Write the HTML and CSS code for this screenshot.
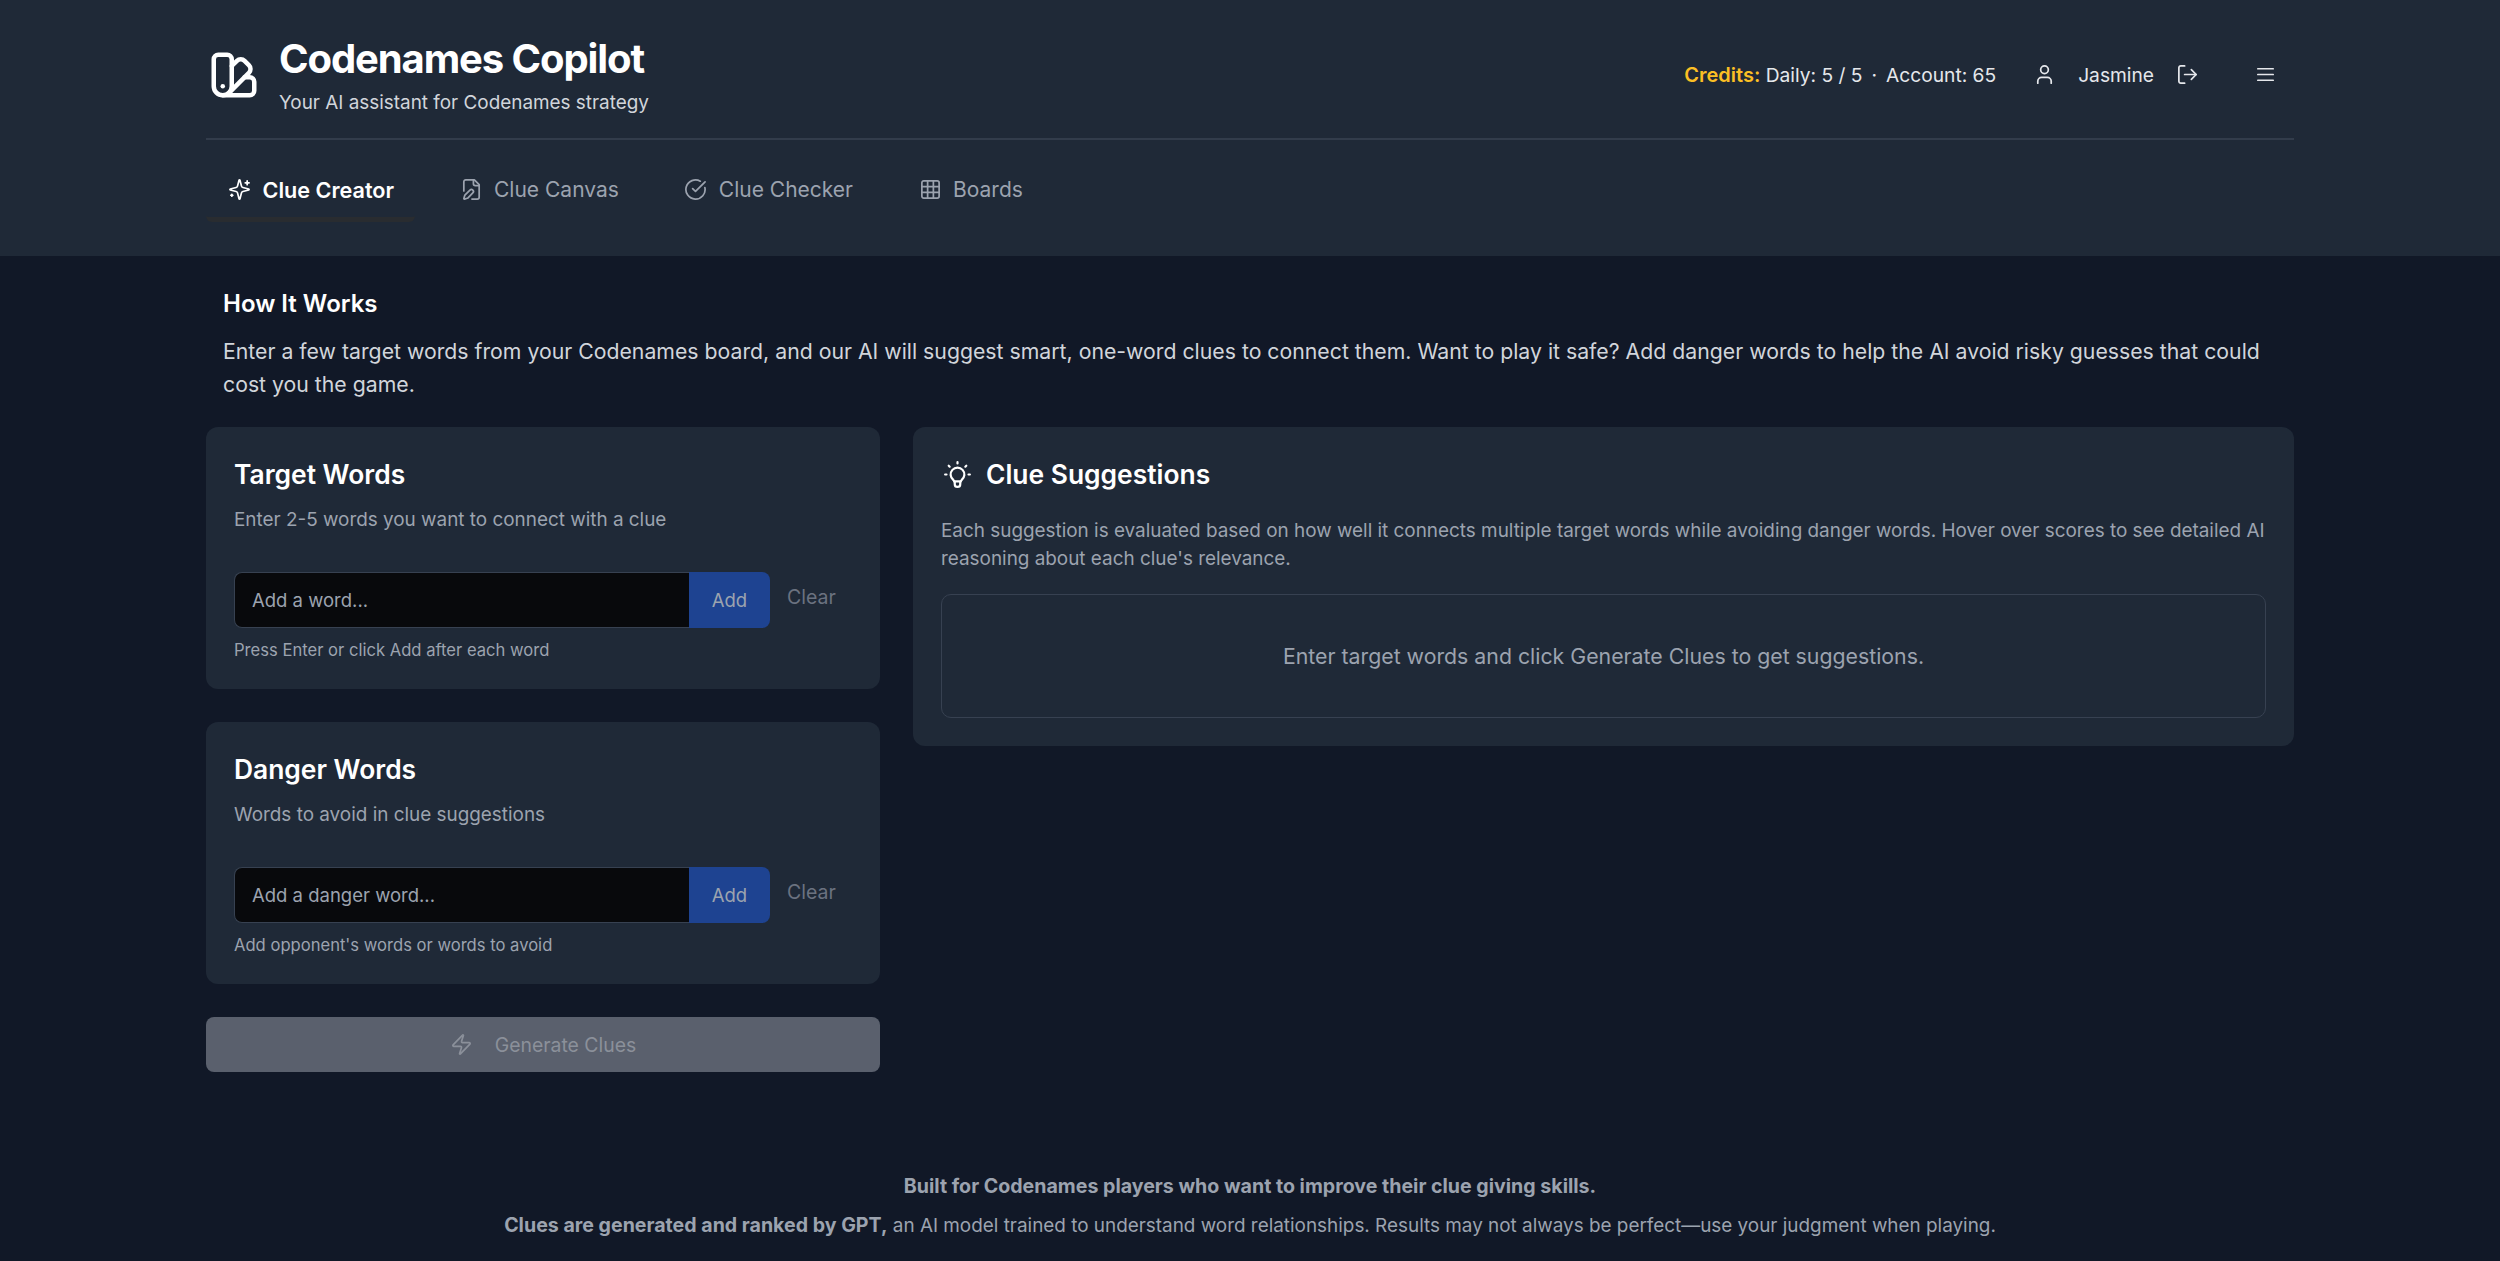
FILE: index.html
```html
<!DOCTYPE html>
<html lang="en">
<head>
  <meta charset="UTF-8">
  <meta name="viewport" content="width=device-width, initial-scale=1.0">
  <title>Codenames Copilot</title>
  <link rel="stylesheet" href="styles.css">
</head>
<body>

<header class="site-header">
  <div class="wrap">
    <div class="top-bar">
      <div class="brand">
        <svg class="brand-icon" viewBox="0 0 24 24"><path d="M11 17a4 4 0 0 1-8 0V5a2 2 0 0 1 2-2h4a2 2 0 0 1 2 2Z"/><path d="M16.7 13H19a2 2 0 0 1 2 2v4a2 2 0 0 1-2 2H7"/><path d="M7 17h.01"/><path d="m11 8 2.3-2.3a2.4 2.4 0 0 1 3.404.004L18.6 7.6a2.4 2.4 0 0 1 .026 3.434L9.9 19.8"/></svg>
        <div>
          <h1 class="title">Codenames Copilot</h1>
          <p class="tagline">Your AI assistant for Codenames strategy</p>
        </div>
      </div>
      <div class="account">
        <p class="credits"><b>Credits:</b> Daily: 5 / 5<span class="dot">·</span>Account: 65</p>
        <svg class="icon user-icon" viewBox="0 0 24 24"><path d="M19 21v-2a4 4 0 0 0-4-4H9a4 4 0 0 0-4 4v2"/><circle cx="12" cy="7" r="4"/></svg>
        <span class="username">Jasmine</span>
        <svg class="icon logout-icon" viewBox="0 0 24 24"><path d="m16 17 5-5-5-5"/><path d="M21 12H9"/><path d="M9 21H5a2 2 0 0 1-2-2V5a2 2 0 0 1 2-2h4"/></svg>
        <svg class="icon menu-icon" viewBox="0 0 24 24"><path d="M4 12h16"/><path d="M4 18h16"/><path d="M4 6h16"/></svg>
      </div>
    </div>
    <nav class="tabs">
      <a class="tab active">
        <svg class="icon" viewBox="0 0 24 24"><path d="M9.937 15.5A2 2 0 0 0 8.5 14.063l-6.135-1.582a.5.5 0 0 1 0-.962L8.5 9.936A2 2 0 0 0 9.937 8.5l1.582-6.135a.5.5 0 0 1 .963 0L14.063 8.5A2 2 0 0 0 15.5 9.937l6.135 1.581a.5.5 0 0 1 0 .964L15.5 14.063a2 2 0 0 0-1.437 1.437l-1.582 6.135a.5.5 0 0 1-.963 0z"/><path d="M20 3v4"/><path d="M22 5h-4"/><path d="M4 17v2"/><path d="M5 18H3"/></svg>
        Clue Creator
      </a>
      <a class="tab">
        <svg class="icon" viewBox="0 0 24 24"><path d="M12.5 22H18a2 2 0 0 0 2-2V7l-5-5H6a2 2 0 0 0-2 2v9.5"/><path d="M14 2v4a2 2 0 0 0 2 2h4"/><path d="M13.378 15.626a1 1 0 1 0-3.004-3.004l-5.01 5.012a2 2 0 0 0-.506.854l-.837 2.87a.5.5 0 0 0 .62.62l2.87-.837a2 2 0 0 0 .854-.506z"/></svg>
        Clue Canvas
      </a>
      <a class="tab">
        <svg class="icon" viewBox="0 0 24 24"><path d="M21.801 10A10 10 0 1 1 17 3.335"/><path d="m9 11 3 3L22 4"/></svg>
        Clue Checker
      </a>
      <a class="tab">
        <svg class="icon" viewBox="0 0 24 24"><rect x="3" y="3" width="18" height="18" rx="2"/><path d="M3 9h18"/><path d="M3 15h18"/><path d="M9 3v18"/><path d="M15 3v18"/></svg>
        Boards
      </a>
    </nav>
  </div>
</header>

<main class="wrap">
  <section class="intro">
    <h2>How It Works</h2>
    <p>Enter a few target words from your Codenames board, and our AI will suggest smart, one-word clues to connect them. Want to play it safe? Add danger words to help the AI avoid risky guesses that could cost you the game.</p>
  </section>

  <div class="columns">
    <div class="left-col">
      <section class="card word-card">
        <h3>Target Words</h3>
        <p class="hint">Enter 2-5 words you want to connect with a clue</p>
        <div class="word-form">
          <div class="word-input">
            <input type="text" placeholder="Add a word...">
            <button class="add-btn">Add</button>
          </div>
          <span class="clear-btn">Clear</span>
        </div>
        <p class="small-note">Press Enter or click Add after each word</p>
      </section>

      <section class="card word-card">
        <h3>Danger Words</h3>
        <p class="hint">Words to avoid in clue suggestions</p>
        <div class="word-form">
          <div class="word-input">
            <input type="text" placeholder="Add a danger word...">
            <button class="add-btn">Add</button>
          </div>
          <span class="clear-btn">Clear</span>
        </div>
        <p class="small-note">Add opponent's words or words to avoid</p>
      </section>

      <button class="generate-btn">
        <svg class="icon" viewBox="0 0 24 24"><path d="M4 14a1 1 0 0 1-.78-1.63l9.9-10.2a.5.5 0 0 1 .86.46l-1.92 6.02A1 1 0 0 0 13 10h7a1 1 0 0 1 .78 1.63l-9.9 10.2a.5.5 0 0 1-.86-.46l1.92-6.02A1 1 0 0 0 11 14z"/></svg>
        Generate Clues
      </button>
    </div>

    <section class="card suggestions">
      <h3 class="with-icon">
        <svg class="bulb-icon" viewBox="0 0 24 24"><path d="M3 12h1m8-9v1m8 8h1M5.6 5.6l.7.7m12.1-.7-.7.7"/><path d="M9 16a5 5 0 1 1 6 0 3.5 3.5 0 0 0-1 3 2 2 0 0 1-4 0 3.5 3.5 0 0 0-1-3"/><path d="M9.7 17h4.6"/></svg>
        Clue Suggestions
      </h3>
      <p class="explain">Each suggestion is evaluated based on how well it connects multiple target words while avoiding danger words. Hover over scores to see detailed AI reasoning about each clue's relevance.</p>
      <div class="empty-box">Enter target words and click Generate Clues to get suggestions.</div>
    </section>
  </div>
</main>

<footer class="site-footer">
  <p><b>Built for Codenames players who want to improve their clue giving skills.</b></p>
  <p><b>Clues are generated and ranked by GPT,</b> an AI model trained to understand word relationships. Results may not always be perfect—use your judgment when playing.</p>
</footer>

</body>
</html>
```

FILE: styles.css
```css
* {
  box-sizing: border-box;
}

body {
  margin: 0;
  min-height: 100vh;
  background-color: #111827;
  color: #fff;
  font-family: 'Inter', 'Liberation Sans', sans-serif;
}

h1, h2, h3, p {
  margin: 0;
}

.wrap {
  width: 2088px;
  margin: 0 auto;
}

.icon {
  width: 23px;
  height: 23px;
  fill: none;
  stroke: currentColor;
  stroke-width: 1.8;
  stroke-linecap: round;
  stroke-linejoin: round;
  flex-shrink: 0;
}

/* header */
.site-header {
  height: 256px;
  background-color: #1f2937;
}

.top-bar {
  display: flex;
  justify-content: space-between;
  align-items: center;
  height: 140px;
  border-bottom: 2px solid #323c4b;
}

.brand {
  display: flex;
  align-items: center;
  gap: 18px;
  margin-top: 12px;
  padding-left: 1px;
}

.brand-icon {
  width: 54px;
  height: 54px;
  fill: none;
  stroke: #fff;
  stroke-width: 2;
  stroke-linecap: round;
  stroke-linejoin: round;
}

.title {
  font-size: 40px;
  line-height: 50px;
  font-weight: 700;
  letter-spacing: -1.1px;
}

.tagline {
  margin-top: 6px;
  font-size: 18.9px;
  line-height: 26px;
  color: #d1d5db;
}

.account {
  display: flex;
  align-items: center;
  font-size: 19.2px;
  color: #e5e7eb;
  margin-top: 11px;
  padding-right: 17px;
}

.credits b {
  color: #fbbf24;
  font-size: 20px;
  font-weight: 600;
}

.dot {
  margin: 0 9px;
}

.user-icon {
  margin-left: 37px;
}

.username {
  margin-left: 22px;
}

.logout-icon {
  margin-left: 22px;
}

.menu-icon {
  margin-left: 55px;
}

.tabs {
  display: flex;
  gap: 22.5px;
  height: 116px;
  padding-top: 22px;
}

.tab {
  display: flex;
  align-items: center;
  gap: 11.5px;
  height: 60px;
  padding: 0 21px 0 22px;
  font-size: 21px;
  color: #9ca3af;
  border-bottom: 5px solid transparent;
}

.tab.active {
  color: #fff;
  font-size: 21.6px;
  font-weight: 600;
  border-bottom-color: #292c30;
  border-radius: 0 0 6px 6px;
}

/* how it works */
.intro {
  padding: 32px 17px 26px;
}

.intro h2 {
  font-size: 24px;
  line-height: 32px;
  font-weight: 600;
}

.intro p {
  margin-top: 15px;
  font-size: 21.25px;
  line-height: 33px;
  color: #d1d5db;
}

/* main columns */
.columns {
  display: grid;
  grid-template-columns: 674px 1fr;
  gap: 33px;
  align-items: start;
}

.left-col {
  display: flex;
  flex-direction: column;
  gap: 33px;
}

.card {
  background-color: #1f2937;
  border-radius: 12px;
  padding: 29px 28px 28px;
}

.card h3 {
  font-size: 26.4px;
  line-height: 36px;
  font-weight: 600;
}

.hint {
  margin-top: 14px;
  font-size: 18.9px;
  line-height: 28px;
  color: #9ca3af;
}

.word-form {
  display: flex;
  align-items: flex-start;
  gap: 17px;
  margin-top: 38px;
}

.word-input {
  display: flex;
  width: 536px;
  height: 56px;
}

.word-input input {
  flex: 1;
  min-width: 0;
  padding: 0 17px;
  background-color: #08090c;
  border: 1px solid #374151;
  border-right: none;
  border-radius: 8px 0 0 8px;
  font-family: inherit;
  font-size: 18.5px;
  color: #fff;
}

.word-input input::placeholder {
  color: #9ca3af;
}

.add-btn {
  width: 81px;
  background-color: #1e4391;
  border: none;
  border-radius: 0 8px 8px 0;
  font-family: inherit;
  font-size: 18.5px;
  color: #9ca3af;
}

.clear-btn {
  margin-top: 12px;
  font-size: 19.5px;
  line-height: 26px;
  color: #6b7280;
}

.small-note {
  margin-top: 11px;
  font-size: 16.6px;
  line-height: 22px;
  color: #9ca3af;
}

.generate-btn {
  display: flex;
  align-items: center;
  justify-content: center;
  gap: 22px;
  height: 55px;
  background-color: #5a606d;
  border: none;
  border-radius: 8px;
  font-family: inherit;
  font-size: 19.4px;
  color: #8b909a;
}

.with-icon {
  display: flex;
  align-items: center;
  gap: 12px;
}

.bulb-icon {
  width: 33px;
  height: 33px;
  fill: none;
  stroke: #fff;
  stroke-width: 1.6;
  stroke-linecap: round;
  stroke-linejoin: round;
}

.explain {
  margin-top: 25px;
  font-size: 18.9px;
  line-height: 28px;
  color: #9ca3af;
}

.empty-box {
  display: flex;
  align-items: center;
  justify-content: center;
  height: 124px;
  margin-top: 21px;
  border: 1px solid #374151;
  border-radius: 10px;
  font-size: 21.3px;
  color: #9ca3af;
}

/* footer */
.site-footer {
  padding-top: 95px;
  text-align: center;
  font-size: 18.9px;
  color: #9ca3af;
}

.site-footer p {
  line-height: 38px;
}

.site-footer b {
  font-size: 19.6px;
}
```
